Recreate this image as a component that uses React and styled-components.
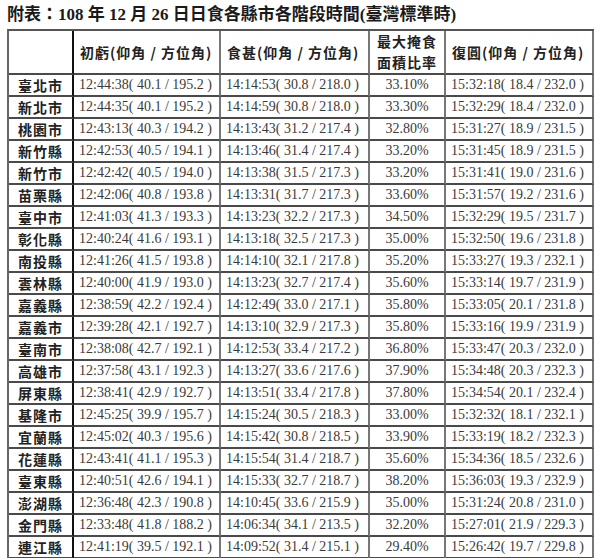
import React from "react";
import styled, { createGlobalStyle } from "styled-components";

const GlobalStyle = createGlobalStyle`
  html, body {
    margin: 0;
    padding: 0;
    background: #ffffff;
  }
`;

const Page = styled.div`
  width: 600px;
  padding: 4px 0 0 7px;
  box-sizing: border-box;
`;

const Title = styled.h1`
  margin: 0 0 3px 0;
  font-family: "Liberation Serif", "Noto Sans CJK TC", serif;
  font-size: 17px;
  font-weight: bold;
  line-height: 22px;
  color: #1a1a1a;
  white-space: nowrap;
`;

const Table = styled.table`
  border-collapse: separate;
  border-spacing: 0;
  table-layout: fixed;
  width: 585px;
  border-top: 2px solid #555;
  border-left: 2px solid #666;
`;

const HeadCell = styled.th`
  height: 40px;
  padding: 0 0 0 ${(p) => (p.$center ? 0 : 6)}px;
  border-right: 2px solid ${(p) => (p.$strong ? "#111" : "#777")};
  border-bottom: 2px solid #4a4a4a;
  font-family: "Noto Sans CJK TC", sans-serif;
  font-size: 14px;
  font-weight: bold;
  letter-spacing: 1px;
  line-height: 21px;
  color: #222;
  text-align: ${(p) => (p.$center ? "center" : "left")};
  vertical-align: middle;
  white-space: pre;
`;

const NameCell = styled.td`
  height: 20px;
  padding: 0;
  border-right: 2px solid #111;
  border-bottom: 2px solid #4a4a4a;
  font-family: "Noto Sans CJK TC", sans-serif;
  font-size: 14px;
  font-weight: bold;
  letter-spacing: 1px;
  color: #222;
  text-align: center;
  vertical-align: middle;
  line-height: 20px;
`;

const DataCell = styled.td`
  height: 20px;
  padding: 0 0 0 ${(p) => (p.$center ? 0 : 5)}px;
  border-right: 2px solid #777;
  border-bottom: 2px solid #4a4a4a;
  font-family: "Liberation Serif", serif;
  font-size: 14px;
  color: #3a3a3a;
  text-align: ${(p) => (p.$center ? "center" : "left")};
  vertical-align: middle;
  line-height: 20px;
  white-space: nowrap;
`;

const rows = [
  ["臺北市", "12:44:38( 40.1 / 195.2 )", "14:14:53( 30.8 / 218.0 )", "33.10%", "15:32:18( 18.4 / 232.0 )"],
  ["新北市", "12:44:35( 40.1 / 195.2 )", "14:14:59( 30.8 / 218.0 )", "33.30%", "15:32:29( 18.4 / 232.0 )"],
  ["桃園市", "12:43:13( 40.3 / 194.2 )", "14:13:43( 31.2 / 217.4 )", "32.80%", "15:31:27( 18.9 / 231.5 )"],
  ["新竹縣", "12:42:53( 40.5 / 194.1 )", "14:13:46( 31.4 / 217.4 )", "33.20%", "15:31:45( 18.9 / 231.5 )"],
  ["新竹市", "12:42:42( 40.5 / 194.0 )", "14:13:38( 31.5 / 217.3 )", "33.20%", "15:31:41( 19.0 / 231.6 )"],
  ["苗栗縣", "12:42:06( 40.8 / 193.8 )", "14:13:31( 31.7 / 217.3 )", "33.60%", "15:31:57( 19.2 / 231.6 )"],
  ["臺中市", "12:41:03( 41.3 / 193.3 )", "14:13:23( 32.2 / 217.3 )", "34.50%", "15:32:29( 19.5 / 231.7 )"],
  ["彰化縣", "12:40:24( 41.6 / 193.1 )", "14:13:18( 32.5 / 217.3 )", "35.00%", "15:32:50( 19.6 / 231.8 )"],
  ["南投縣", "12:41:26( 41.5 / 193.8 )", "14:14:10( 32.1 / 217.8 )", "35.20%", "15:33:27( 19.3 / 232.1 )"],
  ["雲林縣", "12:40:00( 41.9 / 193.0 )", "14:13:23( 32.7 / 217.4 )", "35.60%", "15:33:14( 19.7 / 231.9 )"],
  ["嘉義縣", "12:38:59( 42.2 / 192.4 )", "14:12:49( 33.0 / 217.1 )", "35.80%", "15:33:05( 20.1 / 231.8 )"],
  ["嘉義市", "12:39:28( 42.1 / 192.7 )", "14:13:10( 32.9 / 217.3 )", "35.80%", "15:33:16( 19.9 / 231.9 )"],
  ["臺南市", "12:38:08( 42.7 / 192.1 )", "14:12:53( 33.4 / 217.2 )", "36.80%", "15:33:47( 20.3 / 232.0 )"],
  ["高雄市", "12:37:58( 43.1 / 192.3 )", "14:13:27( 33.6 / 217.6 )", "37.90%", "15:34:48( 20.3 / 232.3 )"],
  ["屏東縣", "12:38:41( 42.9 / 192.7 )", "14:13:51( 33.4 / 217.8 )", "37.80%", "15:34:54( 20.1 / 232.4 )"],
  ["基隆市", "12:45:25( 39.9 / 195.7 )", "14:15:24( 30.5 / 218.3 )", "33.00%", "15:32:32( 18.1 / 232.1 )"],
  ["宜蘭縣", "12:45:02( 40.3 / 195.6 )", "14:15:42( 30.8 / 218.5 )", "33.90%", "15:33:19( 18.2 / 232.3 )"],
  ["花蓮縣", "12:43:41( 41.1 / 195.3 )", "14:15:54( 31.4 / 218.7 )", "35.60%", "15:34:36( 18.5 / 232.6 )"],
  ["臺東縣", "12:40:51( 42.6 / 194.1 )", "14:15:33( 32.7 / 218.7 )", "38.20%", "15:36:03( 19.3 / 232.9 )"],
  ["澎湖縣", "12:36:48( 42.3 / 190.8 )", "14:10:45( 33.6 / 215.9 )", "35.00%", "15:31:24( 20.8 / 231.0 )"],
  ["金門縣", "12:33:48( 41.8 / 188.2 )", "14:06:34( 34.1 / 213.5 )", "32.20%", "15:27:01( 21.9 / 229.3 )"],
  ["連江縣", "12:41:19( 39.5 / 192.1 )", "14:09:52( 31.4 / 215.1 )", "29.40%", "15:26:42( 19.7 / 229.8 )"],
];

const App = () => {
  return (
    <Page>
      <GlobalStyle />
      <Title>附表：108 年 12 月 26 日日食各縣市各階段時間(臺灣標準時)</Title>
      <Table>
        <colgroup>
          <col style={{ width: 65 }} />
          <col style={{ width: 147 }} />
          <col style={{ width: 149 }} />
          <col style={{ width: 76 }} />
          <col style={{ width: 148 }} />
        </colgroup>
        <thead>
          <tr>
            <HeadCell $strong $center />
            <HeadCell>初虧(仰角 / 方位角)</HeadCell>
            <HeadCell>食甚(仰角 / 方位角)</HeadCell>
            <HeadCell $center>
              最大掩食
              <br />
              面積比率
            </HeadCell>
            <HeadCell>復圓(仰角 / 方位角)</HeadCell>
          </tr>
        </thead>
        <tbody>
          {rows.map((r) => (
            <tr key={r[0]}>
              <NameCell>{r[0]}</NameCell>
              <DataCell>{r[1]}</DataCell>
              <DataCell>{r[2]}</DataCell>
              <DataCell $center>{r[3]}</DataCell>
              <DataCell>{r[4]}</DataCell>
            </tr>
          ))}
        </tbody>
      </Table>
    </Page>
  );
};

export default App;
